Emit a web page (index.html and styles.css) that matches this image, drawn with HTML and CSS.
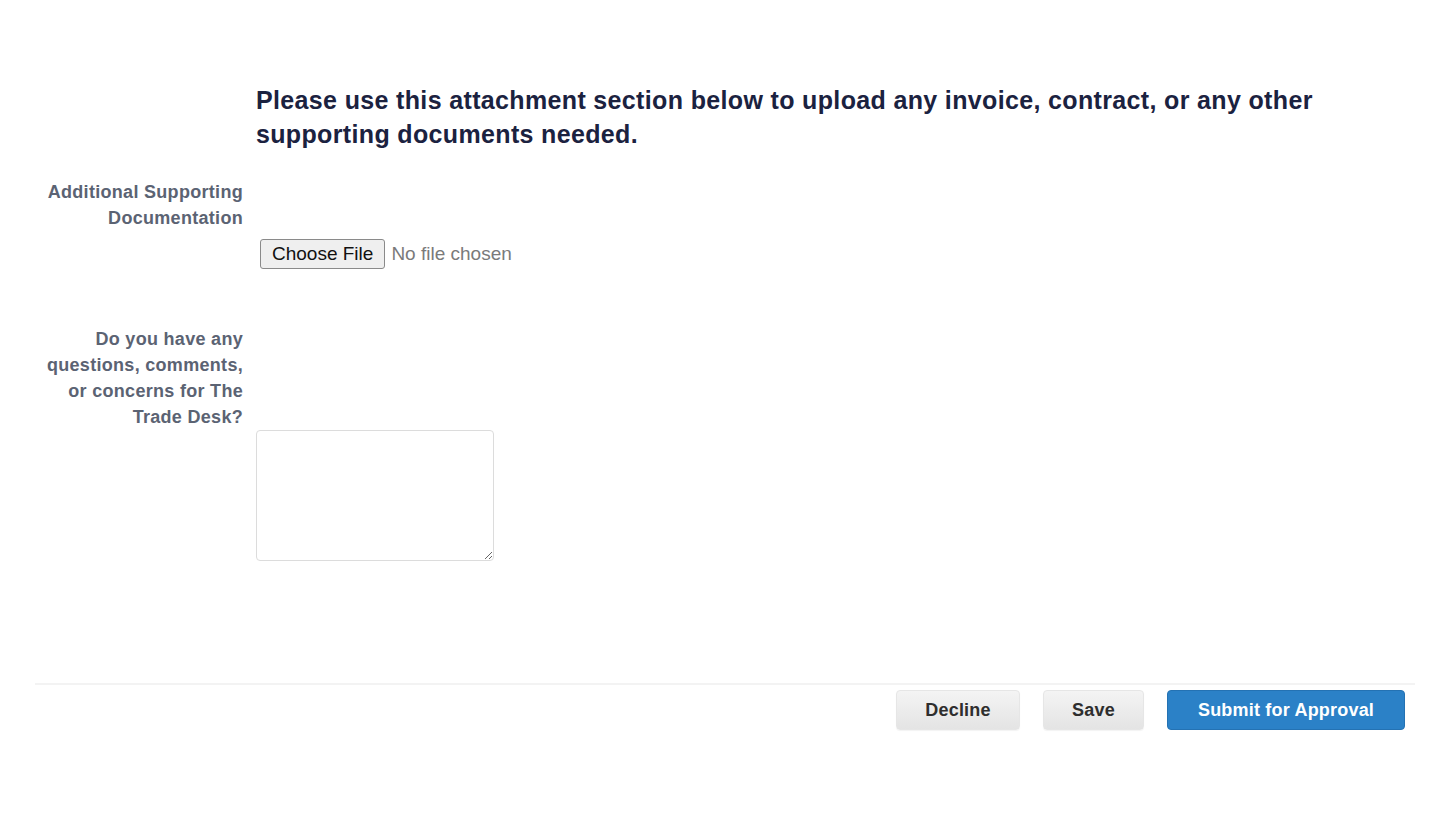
FILE: index.html
```html
<!DOCTYPE html>
<html>
<head>
<meta charset="utf-8">
<link rel="stylesheet" href="styles.css">
</head>
<body>
<div class="page">
  <div class="intro">
    <div class="spacer"></div>
    <h2 class="heading">Please use this attachment section below to upload any invoice, contract, or any other supporting documents needed.</h2>
  </div>
  <div class="field field-file">
    <label class="label">Additional Supporting Documentation</label>
    <div class="control"><input type="file" class="file"></div>
  </div>
  <div class="field field-comments">
    <label class="label">Do you have any questions, comments, or concerns for The Trade Desk?</label>
    <div class="control"><textarea class="comments"></textarea></div>
  </div>
  <div class="footer">
    <button class="btn btn-grey btn-decline">Decline</button>
    <button class="btn btn-grey btn-save">Save</button>
    <button class="btn btn-primary">Submit for Approval</button>
  </div>
</div>
</body>
</html>
```
FILE: styles.css
```css
html, body {
  margin: 0;
  padding: 0;
  background: #fff;
}
body {
  font-family: "Liberation Sans", Arial, sans-serif;
}
.page {
  width: 1450px;
  height: 814px;
  padding-top: 83px;
  box-sizing: border-box;
}
.intro {
  display: grid;
  grid-template-columns: 256px 1fr;
}
.heading {
  margin: 0;
  font-size: 25px;
  line-height: 34px;
  letter-spacing: 0.35px;
  font-weight: bold;
  color: #1b2240;
  padding-right: 100px;
}
.field {
  display: grid;
  grid-template-columns: 243px 1fr;
  column-gap: 13px;
}
.label {
  grid-column: 1;
  grid-row: 1;
  text-align: right;
  font-size: 18px;
  line-height: 26px;
  letter-spacing: 0.3px;
  font-weight: bold;
  color: #5b6373;
  padding-left: 40px;
}
.control {
  grid-column: 2;
  grid-row: 2;
}
.field-file {
  margin-top: 28px;
}
.field-file .control {
  padding-top: 8px;
  padding-left: 4px;
}
.file {
  font-family: "Liberation Sans", Arial, sans-serif;
  font-size: 19px;
  color: #7a7a7a;
}
.file::file-selector-button {
  font-family: "Liberation Sans", Arial, sans-serif;
  font-size: 19px;
  color: #111;
  background: #efefef;
  border: 1px solid #8a8a8a;
  border-radius: 3px;
  padding: 2px 11px;
  margin-right: 6px;
  height: 30px;
}
.field-comments {
  margin-top: 57px;
}
.comments {
  display: block;
  width: 238px;
  height: 131px;
  box-sizing: border-box;
  border: 1px solid #dcdcdc;
  border-radius: 4px;
  resize: vertical;
  margin: 0;
}
.footer {
  margin: 122px 35px 0 35px;
  border-top: 2px solid #f3f3f3;
  padding-top: 5px;
  display: flex;
  justify-content: flex-end;
  gap: 23px;
  padding-right: 10px;
}
.btn {
  height: 40px;
  border-radius: 4px;
  font-family: "Liberation Sans", Arial, sans-serif;
  font-size: 18px;
  letter-spacing: 0.2px;
  font-weight: bold;
  border: 1px solid #e6e6e6;
  cursor: pointer;
}
.btn-grey {
  background: linear-gradient(#f4f4f4, #e4e4e4);
  color: #2e2e2e;
  box-shadow: 0 1px 1px rgba(0,0,0,0.05);
}
.btn-decline {
  width: 124px;
}
.btn-save {
  width: 101px;
}
.btn-primary {
  width: 238px;
  background: #2b81c7;
  border-color: #2472b3;
  color: #fff;
}
```
